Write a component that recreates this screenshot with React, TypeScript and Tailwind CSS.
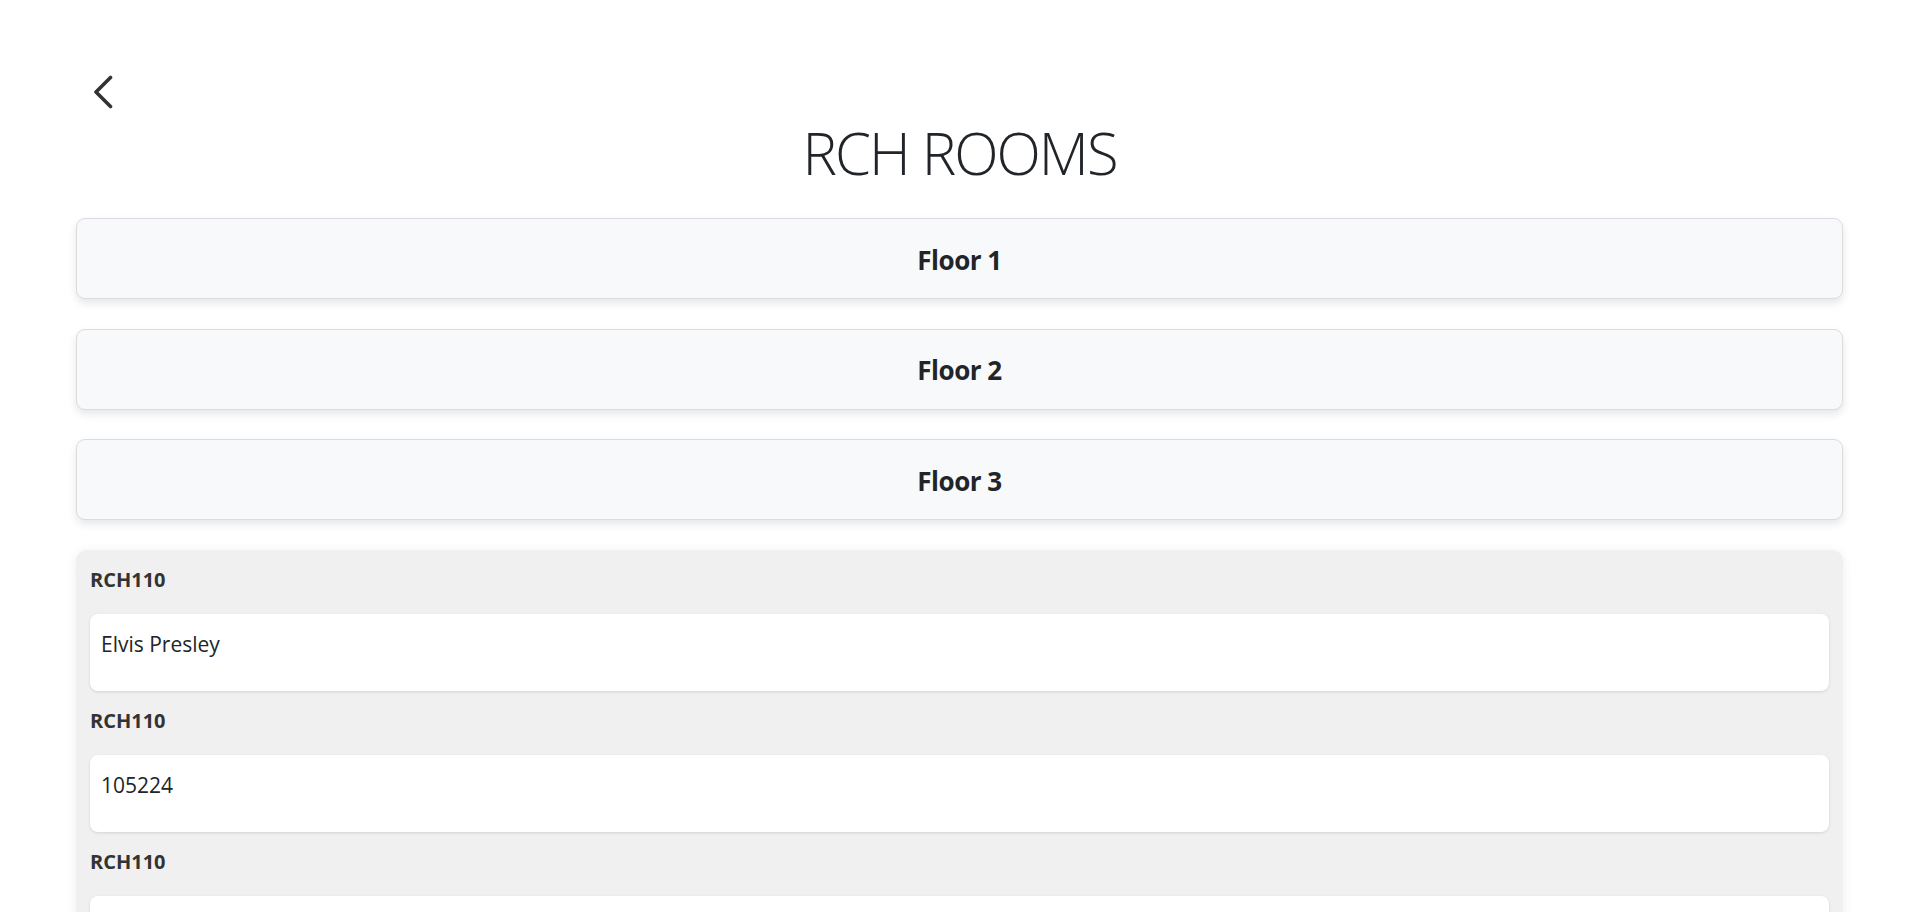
import React from 'react';

const floors = ['Floor 1', 'Floor 2', 'Floor 3'];

const rooms = [
  { label: 'RCH110', value: 'Elvis Presley' },
  { label: 'RCH110', value: '105224' },
  { label: 'RCH110', value: '' },
];

const App: React.FC = () => {
  return (
    <div
      className="min-h-screen bg-white text-[#212529] px-[76px] pb-[24px]"
      style={{ fontFamily: '"Open Sans", "Noto Sans", sans-serif' }}
    >
      <div className="pt-[75px] pl-[17px]">
        <button type="button" className="block" aria-label="Back">
          <svg width="20" height="34" viewBox="0 0 20 34" fill="none" stroke="#333333" strokeWidth="3.6" strokeLinecap="round" strokeLinejoin="round">
            <polyline points="17.5,2.5 3,17 17.5,31.5" />
          </svg>
        </button>
      </div>

      <h1 className="mt-[7.5px] text-center text-[58px] leading-[72px] font-light tracking-[-2px]">RCH ROOMS</h1>

      <div className="mt-[29.5px] flex flex-col gap-[29.5px]">
        {floors.map((floor) => (
          <div
            key={floor}
            className="h-[81px] flex items-center justify-center rounded-[9px] border border-[#dadce0] bg-[#f8f9fa] shadow-[0_4px_8px_rgba(0,0,0,0.1)]"
          >
            <span className="mt-[2px] text-[26px] font-bold leading-[32px] tracking-[-0.5px] text-[#212529]">{floor}</span>
          </div>
        ))}
      </div>

      <div className="mt-[29.5px] rounded-[11px] bg-[#f0f0f0] px-[14px] pt-[18.5px] pb-[14px] shadow-[0_2px_12px_rgba(0,0,0,0.07)]">
        {rooms.map((room, i) => (
          <div key={i} className={i > 0 ? 'mt-[18.5px]' : ''}>
            <div className="text-[20px] font-bold leading-[24px] text-[#333333]">{room.label}</div>
            <div className="mt-[22px] h-[76.5px] rounded-[8px] bg-white px-[11px] pt-[15px] text-[21px] leading-[31.5px] text-[#212529] shadow-[0_1px_3px_rgba(0,0,0,0.12)]">
              {room.value}
            </div>
          </div>
        ))}
      </div>
    </div>
  );
};

export default App;
